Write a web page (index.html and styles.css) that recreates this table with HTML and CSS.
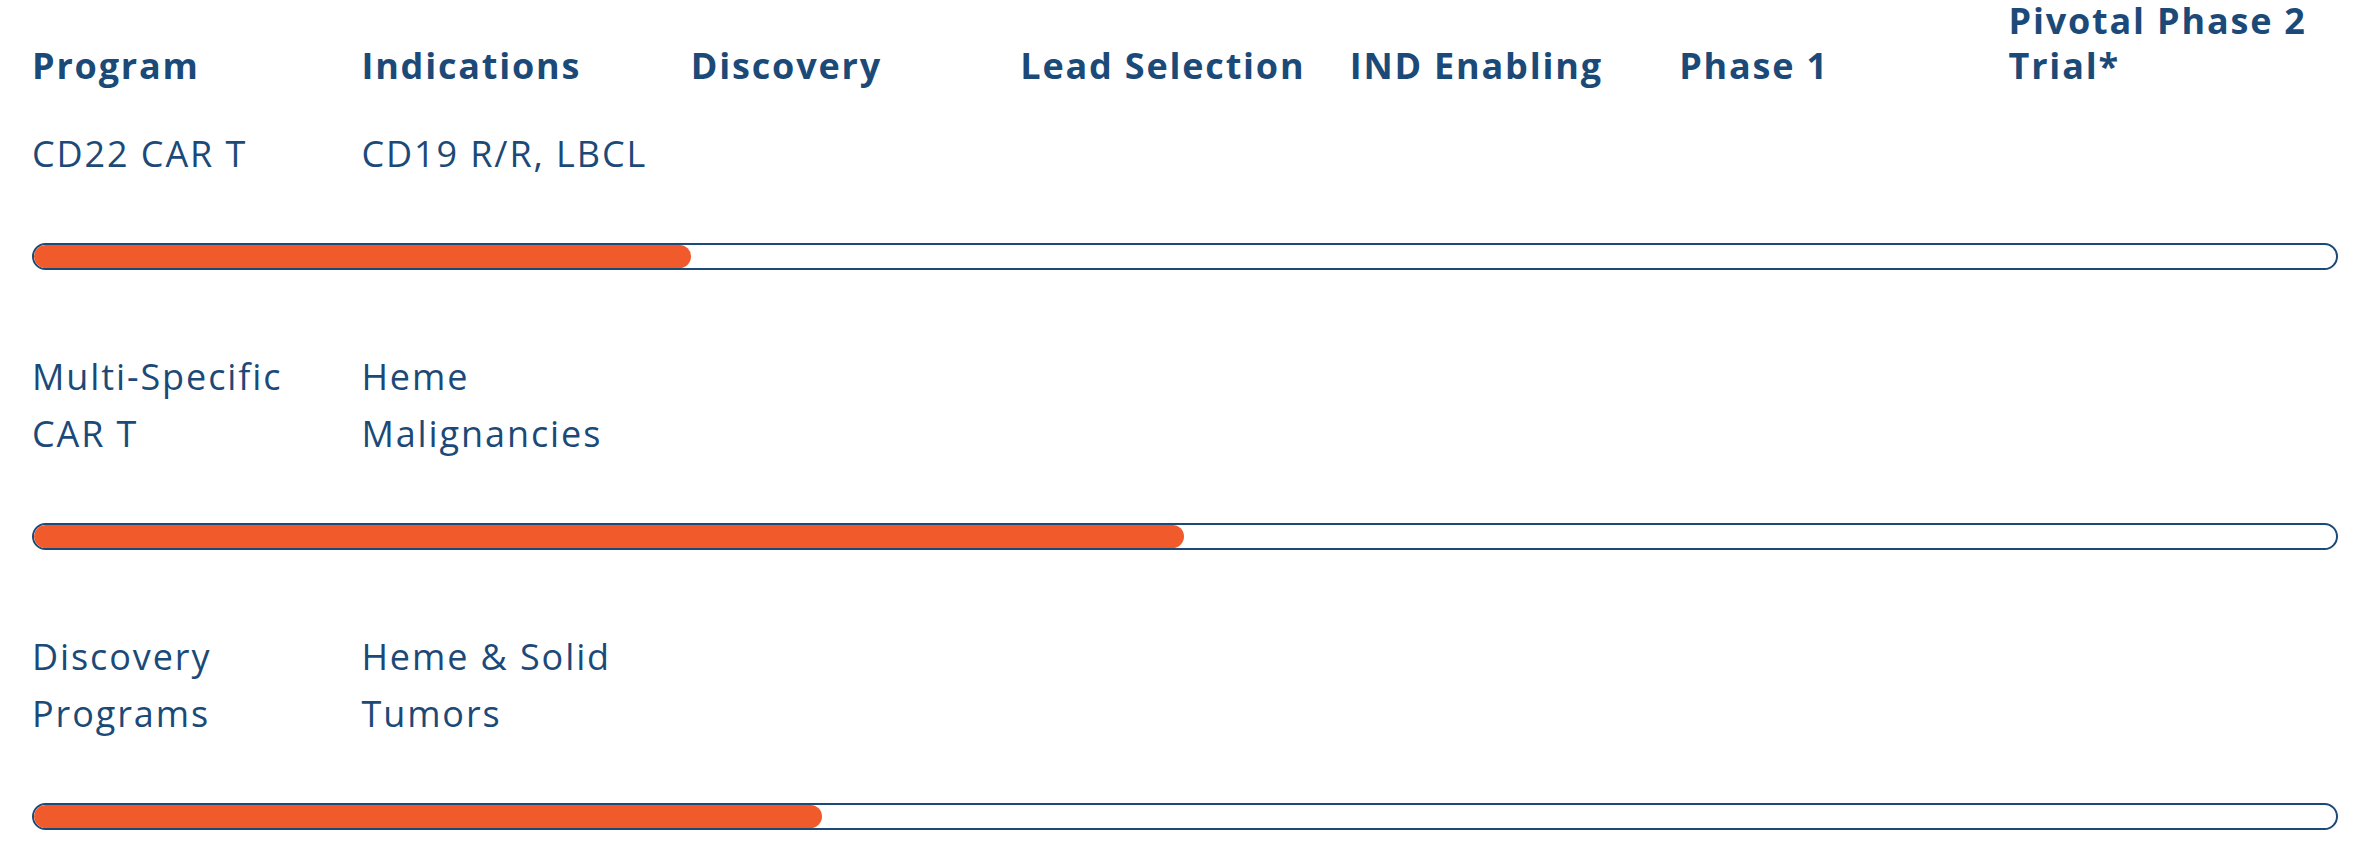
FILE: index.html
```html
<!DOCTYPE html>
<html lang="en">
<head>
  <meta charset="UTF-8" />
  <meta name="viewport" content="width=device-width, initial-scale=1.0"/>
  <title>Pipeline</title>

  <link rel="stylesheet" href="styles.css">
</head>
<body>

  <div class="pipeline">
    <div class="pipeline-head">
      <div>Program</div>
      <div>Indications</div>
      <div>Discovery</div>
      <div>Lead Selection</div>
      <div>IND Enabling</div>
      <div>Phase 1</div>
      <div>Pivotal Phase 2 Trial*</div>
    </div>

    <div class="program">
      <div class="program-info">
        <div>CD22 CAR T</div>
        <div>CD19 R/R, LBCL</div>
      </div>
      <div class="progress">
        <div class="progress-fill" style="width: 28.55%"></div>
      </div>
    </div>

    <div class="program">
      <div class="program-info">
        <div>Multi-Specific CAR T</div>
        <div>Heme Malignancies</div>
      </div>
      <div class="progress">
        <div class="progress-fill" style="width: 49.95%"></div>
      </div>
    </div>

    <div class="program">
      <div class="program-info">
        <div>Discovery Programs</div>
        <div>Heme &amp; Solid Tumors</div>
      </div>
      <div class="progress">
        <div class="progress-fill" style="width: 34.25%"></div>
      </div>
    </div>
  </div>

</body>
</html>
```

FILE: styles.css
```css
body {
  font-family: 'Open Sans', 'Noto Sans', sans-serif;
  background-color: #fff;
  color: #1c4a78;
  margin: 0;
  padding: 0;
}

.pipeline {
  padding: 0 29px 0 32px;
}

.pipeline-head,
.program-info {
  display: grid;
  grid-template-columns: repeat(7, 1fr);
}

.pipeline-head {
  align-items: end;
  margin-top: -2px;
  font-size: 36px;
  font-weight: 700;
  line-height: 45px;
  letter-spacing: 1.8px;
}

.program {
  padding-top: 78px;
}

.pipeline-head + .program {
  padding-top: 37px;
}

.program-info {
  font-size: 36px;
  line-height: 57px;
  letter-spacing: 1.9px;
  margin-bottom: 61px;
}

.progress {
  box-sizing: border-box;
  height: 27px;
  border: 2px solid #1c4a78;
  border-radius: 14px;
  overflow: hidden;
}

.progress-fill {
  height: 100%;
  background-color: #f15a2b;
  border-radius: 12px;
}
```
